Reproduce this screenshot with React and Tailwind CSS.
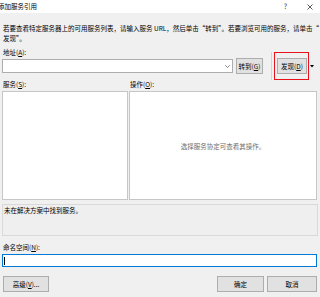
import React from "react";

const font = "font-['Noto_Sans_CJK_SC','Noto_Sans',sans-serif]";

function Btn({ children, className = "" }) {
  return (
    <div
      className={`flex items-center justify-center h-[16px] bg-[#e1e1e1] border border-[#adadad] text-[6.5px] leading-none ${className}`}
    >
      {children}
    </div>
  );
}

export default function App() {
  return (
    <div
      className={`w-[320px] h-[297px] bg-[#f0f0f0] overflow-hidden flex flex-col text-black ${font}`}
    >
      {/* title bar */}
      <div className="h-[13px] bg-white flex items-center shrink-0">
        <span className="-ml-[2px] text-[6.5px] leading-none">添加服务引用</span>
        <span className="ml-auto text-[7px] leading-none text-[#333]">?</span>
        <svg className="ml-[20px] mr-[7px]" width="6" height="6" viewBox="0 0 6 6">
          <path d="M0.5 0.5 L5.5 5.5 M5.5 0.5 L0.5 5.5" stroke="#333" strokeWidth="0.8" />
        </svg>
      </div>

      <div className="px-[2px] flex flex-col text-[6.5px] leading-[10px]">
        <p className="mt-[10px] pl-[1px] whitespace-nowrap">
          若要查看特定服务器上的可用服务列表，请输入服务 URL，然后单击“转到”。若要浏览可用的服务，请单击“
          <br />
          发现”。
        </p>

        <div className="mt-[4px] pl-[1px]">
          地址(<u>A</u>):
        </div>

        <div className="mt-[1px] h-[16px] flex items-center">
          <div className="w-[231px] h-[14px] bg-white border border-[#adadad] flex items-center justify-end pr-[2px]">
            <svg width="5" height="3" viewBox="0 0 5 3">
              <path d="M0.3 0.3 L2.5 2.5 L4.7 0.3" fill="none" stroke="#555" strokeWidth="0.7" />
            </svg>
          </div>
          <Btn className="ml-[3px] w-[27px] h-[15px]">
            转到(<u>G</u>)
          </Btn>
          <div className="ml-[8px] w-px h-[28px] bg-[#d4d4d4] shrink-0" />
          <div className="relative ml-[5px]">
            <Btn className="w-[30px]">
              发现(<u>D</u>)
            </Btn>
            <div className="absolute -left-[3px] -top-[6px] w-[35px] h-[28px] border border-[#e8121b]" />
          </div>
          <div className="w-[10px] h-[16px] flex items-center justify-center">
            <svg width="4" height="3" viewBox="0 0 4 3">
              <path d="M0 0 L4 0 L2 2.5 Z" fill="#000" />
            </svg>
          </div>
        </div>

        <div className="mt-[5px] flex">
          <div className="w-[127px] pl-[1px]">
            服务(<u>S</u>):
          </div>
          <div className="pl-[1px]">
            操作(<u>O</u>):
          </div>
        </div>

        <div className="mt-[2px] h-[109px] flex gap-[1px]">
          <div className="w-[126px] bg-white border border-[#c6c6c6]" />
          <div className="w-[188px] bg-white border border-[#c6c6c6] flex items-center justify-center text-[#6d6d6d]">
            选择服务协定可查看其操作。
          </div>
        </div>

        <div className="mt-[4px] h-[32px] border border-[#d9d9d9] bg-[#efefef] pl-[1px] leading-[8px] pt-[1px]">
          未在解决方案中找到服务。
        </div>

        <div className="mt-[6px] pl-[1px]">
          命名空间(<u>N</u>):
        </div>

        <div className="mt-[2px] h-[13px] w-[315px] bg-white border border-[#0078d7] flex items-center pl-[1px]">
          <div className="w-px h-[8px] bg-black" />
        </div>

        <div className="mt-[9px] flex items-center">
          <Btn className="ml-[1px] w-[46px]">
            高级(<u>V</u>)...
          </Btn>
          <Btn className="ml-auto w-[47px] border-[#0078d7]">确定</Btn>
          <Btn className="ml-[3px] mr-[1px] w-[50px]">取消</Btn>
        </div>
      </div>
    </div>
  );
}
